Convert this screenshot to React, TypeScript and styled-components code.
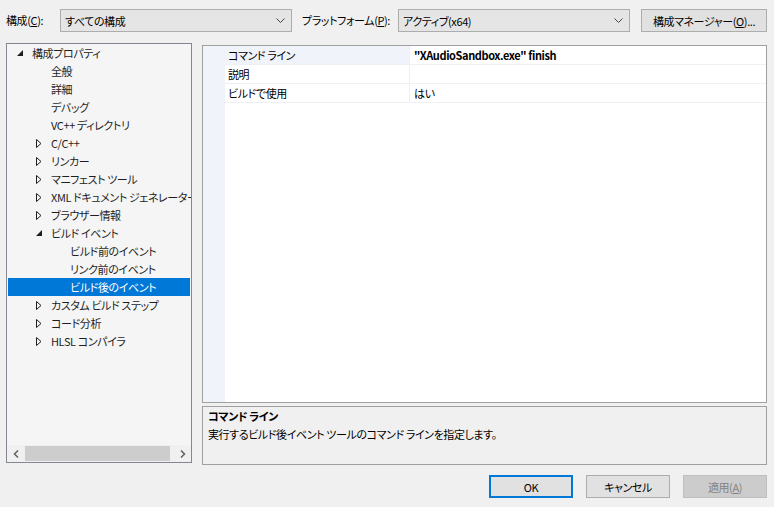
import React from 'react';
import styled, { createGlobalStyle } from 'styled-components';

const GlobalStyle = createGlobalStyle`
    html, body {
        margin: 0;
        padding: 0;
        background: #f0f0f0;
    }
    body {
        font-family: 'Noto Sans CJK JP', 'Noto Sans', sans-serif;
        font-size: 11px;
        letter-spacing: -0.4px;
        font-feature-settings: 'palt';
        color: #000000;
    }
`;

const Dialog = styled.div`
    width: 774px;
    height: 507px;
    box-sizing: border-box;
    padding: 9px 7px 0 6px;
    background: #f0f0f0;
    display: flex;
    flex-direction: column;
    overflow: hidden;
`;

const TopBar = styled.div`
    display: flex;
    align-items: center;
    height: 23px;
`;

const FieldLabel = styled.span<{ width: number; offset?: number }>`
    width: ${({ width }) => width}px;
    flex-shrink: 0;
    margin-left: ${({ offset }) => offset ?? 0}px;
    white-space: nowrap;
    line-height: 23px;
`;

const Underline = styled.span`
    text-decoration: underline;
`;

const Combo = styled.div`
    width: 232px;
    height: 23px;
    flex-shrink: 0;
    box-sizing: border-box;
    border: 1px solid #adadad;
    background: #e5e5e5;
    display: flex;
    align-items: center;
    padding: 0 6px 0 4px;
`;

const ComboText = styled.span`
    flex: 1;
    white-space: nowrap;
`;

const Chevron = styled.svg`
    width: 9px;
    height: 6px;
`;

const Button = styled.button<{ variant?: 'default' | 'primary' | 'disabled' }>`
    height: 23px;
    box-sizing: border-box;
    font: inherit;
    letter-spacing: inherit;
    font-feature-settings: 'palt';
    padding: 0;
    margin: 0;
    color: ${({ variant }) => (variant === 'disabled' ? '#838383' : '#000000')};
    background: ${({ variant }) => (variant === 'disabled' ? '#cccccc' : '#e1e1e1')};
    border: ${({ variant }) =>
        variant === 'primary'
            ? '2px solid #0078d7'
            : variant === 'disabled'
            ? '1px solid #bfbfbf'
            : '1px solid #adadad'};
`;

const ManagerButton = styled(Button)`
    width: 126px;
    flex-shrink: 0;
    margin-left: 11px;
`;

const Main = styled.div`
    display: flex;
    margin-top: 11px;
    gap: 10px;
`;

const TreePanel = styled.div`
    width: 186px;
    height: 420px;
    box-sizing: border-box;
    border: 1px solid #828790;
    background: #f5f5f5;
    display: flex;
    flex-direction: column;
`;

const TreeList = styled.div`
    flex: 1;
    overflow: hidden;
`;

const TreeRow = styled.div<{ level: number; selected?: boolean }>`
    height: 18px;
    display: flex;
    align-items: center;
    margin: 0 1px;
    padding-left: ${({ level }) => 9 + level * 19}px;
    white-space: nowrap;
    background: ${({ selected }) => (selected ? '#0078d7' : 'transparent')};
    color: ${({ selected }) => (selected ? '#ffffff' : '#1e1e1e')};
`;

const Expander = styled.span`
    width: 15px;
    height: 18px;
    display: flex;
    align-items: center;
    flex-shrink: 0;
`;

const HScroll = styled.div`
    height: 17px;
    display: flex;
    align-items: center;
    background: #f0f0f0;
`;

const ScrollArrow = styled.div`
    width: 17px;
    height: 17px;
    display: flex;
    align-items: center;
    justify-content: center;
`;

const ScrollTrack = styled.div`
    flex: 1;
    height: 17px;
    display: flex;
    align-items: center;
`;

const ScrollThumb = styled.div`
    width: 145px;
    height: 15px;
    margin-left: 1px;
    background: #cdcdcd;
`;

const RightColumn = styled.div`
    width: 566px;
    padding-top: 2px;
    display: flex;
    flex-direction: column;
    gap: 3px;
`;

const Grid = styled.div`
    height: 358px;
    box-sizing: border-box;
    border: 1px solid #a0a0a0;
    background: #ffffff;
    display: flex;
`;

const GridMargin = styled.div`
    width: 22px;
    background: #f0f3f9;
`;

const GridBody = styled.div`
    flex: 1;
`;

const GridRow = styled.div`
    display: flex;
    height: 18px;
    border-bottom: 1px solid #eef0f6;
`;

const NameCell = styled.div<{ active?: boolean }>`
    width: 185px;
    box-sizing: border-box;
    padding-left: 3px;
    line-height: 18px;
    border-right: 1px solid #eef0f6;
    background: ${({ active }) => (active ? '#f0f3f9' : '#ffffff')};
    white-space: nowrap;
`;

const ValueCell = styled.div<{ bold?: boolean }>`
    flex: 1;
    padding-left: 4px;
    line-height: 18px;
    font-weight: ${({ bold }) => (bold ? 700 : 400)};
    white-space: nowrap;
`;

const Description = styled.div`
    height: 59px;
    box-sizing: border-box;
    border: 1px solid #a0a0a0;
    background: #f0f0f0;
    padding: 0 5px;
`;

const DescTitle = styled.div`
    font-weight: 700;
    line-height: 18px;
`;

const DescText = styled.div`
    line-height: 18px;
`;

const Footer = styled.div`
    display: flex;
    justify-content: flex-end;
    gap: 13px;
    margin-top: 10px;
`;

const FooterButton = styled(Button)`
    width: 84px;
`;

const ChevronDown = () => (
    <Chevron viewBox="0 0 9 6">
        <path d="M0.5 0.5 L4.5 4.5 L8.5 0.5" fill="none" stroke="#444" strokeWidth="1" />
    </Chevron>
);

const ExpandedGlyph = () => (
    <svg width="6" height="6" viewBox="0 0 6 6">
        <path d="M6 0 L6 6 L0 6 Z" fill="#1e1e1e" />
    </svg>
);

const CollapsedGlyph = () => (
    <svg width="6" height="9" viewBox="0 0 6 9">
        <path d="M0.5 0.5 L5 4.5 L0.5 8.5 Z" fill="none" stroke="#1e1e1e" strokeWidth="1" />
    </svg>
);

type TreeItem = {
    label: string;
    level: number;
    state?: 'open' | 'closed';
    selected?: boolean;
};

const treeItems: TreeItem[] = [
    { label: '構成プロパティ', level: 0, state: 'open' },
    { label: '全般', level: 1 },
    { label: '詳細', level: 1 },
    { label: 'デバッグ', level: 1 },
    { label: 'VC++ ディレクトリ', level: 1 },
    { label: 'C/C++', level: 1, state: 'closed' },
    { label: 'リンカー', level: 1, state: 'closed' },
    { label: 'マニフェスト ツール', level: 1, state: 'closed' },
    { label: 'XML ドキュメント ジェネレーター', level: 1, state: 'closed' },
    { label: 'ブラウザー情報', level: 1, state: 'closed' },
    { label: 'ビルド イベント', level: 1, state: 'open' },
    { label: 'ビルド前のイベント', level: 2 },
    { label: 'リンク前のイベント', level: 2 },
    { label: 'ビルド後のイベント', level: 2, selected: true },
    { label: 'カスタム ビルド ステップ', level: 1, state: 'closed' },
    { label: 'コード分析', level: 1, state: 'closed' },
    { label: 'HLSL コンパイラ', level: 1, state: 'closed' },
];

const properties = [
    { name: 'コマンド ライン', value: '"XAudioSandbox.exe" finish', bold: true, active: true },
    { name: '説明', value: '' },
    { name: 'ビルドで使用', value: 'はい' },
];

const App = () => {
    return (
        <>
            <GlobalStyle />
            <Dialog>
                <TopBar>
                    <FieldLabel width={54}>
                        構成(<Underline>C</Underline>):
                    </FieldLabel>
                    <Combo>
                        <ComboText>すべての構成</ComboText>
                        <ChevronDown />
                    </Combo>
                    <FieldLabel width={96} offset={10}>
                        プラットフォーム(<Underline>P</Underline>):
                    </FieldLabel>
                    <Combo>
                        <ComboText>アクティブ(x64)</ComboText>
                        <ChevronDown />
                    </Combo>
                    <ManagerButton>
                        構成マネージャー(<Underline>O</Underline>)...
                    </ManagerButton>
                </TopBar>
                <Main>
                    <TreePanel>
                        <TreeList>
                            {treeItems.map((item) => (
                                <TreeRow key={item.label} level={item.level} selected={item.selected}>
                                    <Expander>
                                        {item.state === 'open' && <ExpandedGlyph />}
                                        {item.state === 'closed' && <CollapsedGlyph />}
                                    </Expander>
                                    {item.label}
                                </TreeRow>
                            ))}
                        </TreeList>
                        <HScroll>
                            <ScrollArrow>
                                <svg width="6" height="8" viewBox="0 0 6 8">
                                    <path d="M5 0.5 L1.5 4 L5 7.5" fill="none" stroke="#606060" strokeWidth="1.5" />
                                </svg>
                            </ScrollArrow>
                            <ScrollTrack>
                                <ScrollThumb />
                            </ScrollTrack>
                            <ScrollArrow>
                                <svg width="6" height="8" viewBox="0 0 6 8">
                                    <path d="M1 0.5 L4.5 4 L1 7.5" fill="none" stroke="#606060" strokeWidth="1.5" />
                                </svg>
                            </ScrollArrow>
                        </HScroll>
                    </TreePanel>
                    <RightColumn>
                        <Grid>
                            <GridMargin />
                            <GridBody>
                                {properties.map((p) => (
                                    <GridRow key={p.name}>
                                        <NameCell active={p.active}>{p.name}</NameCell>
                                        <ValueCell bold={p.bold}>{p.value}</ValueCell>
                                    </GridRow>
                                ))}
                            </GridBody>
                        </Grid>
                        <Description>
                            <DescTitle>コマンド ライン</DescTitle>
                            <DescText>実行するビルド後イベント ツールのコマンド ラインを指定します。</DescText>
                        </Description>
                    </RightColumn>
                </Main>
                <Footer>
                    <FooterButton variant="primary">OK</FooterButton>
                    <FooterButton>キャンセル</FooterButton>
                    <FooterButton variant="disabled">
                        適用(<Underline>A</Underline>)
                    </FooterButton>
                </Footer>
            </Dialog>
        </>
    );
};

export default App;
